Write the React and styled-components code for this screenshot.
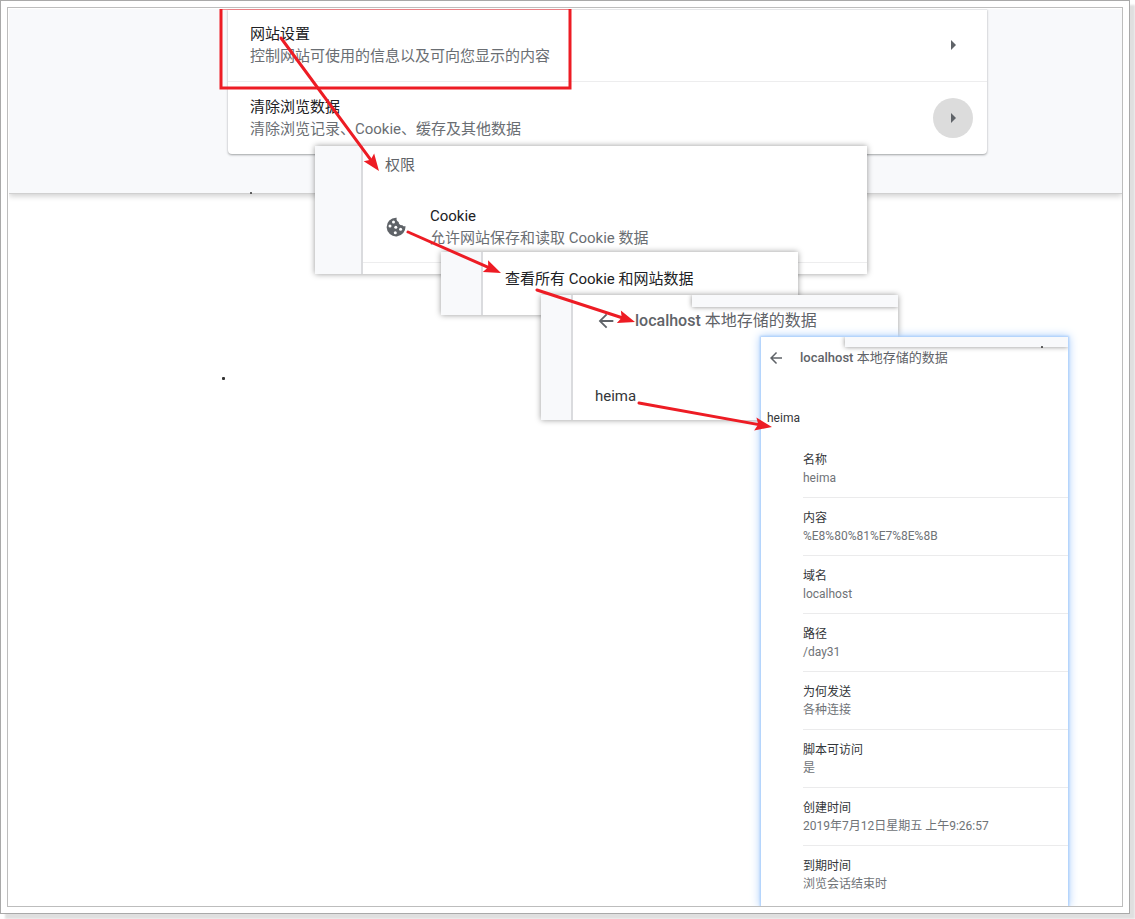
import React from "react";
import styled, { createGlobalStyle } from "styled-components";

const GlobalStyle = createGlobalStyle`
  * { box-sizing: border-box; }
  body {
    margin: 0;
    background: #fff;
    font-family: Roboto, "Noto Sans CJK SC", sans-serif;
    font-size: 15px;
    color: #202124;
  }
  h2, h3, p, dl, dd, dt { margin: 0; font-weight: 400; }
`;

const Page = styled.main`
  display: flex;
  min-height: 100vh;
  padding: 0 5px 5px 0;
`;

const Frame = styled.div`
  display: flex;
  flex: 1;
  padding: 6px;
  border: 1px solid #a9a9a9;
  background: #fff;
  box-shadow: 5px 5px 2px #dfdfdf;
`;

const Mat = styled.div`
  display: flex;
  flex: 1;
  padding: 1px 0 0 1px;
  border: 1px solid #bdbdbd;
`;

const Canvas = styled.div`
  position: relative;
  flex: 1;
  overflow: hidden;
`;

const Backdrop = styled.section`
  height: 185px;
  padding-left: 219px;
  background: #f8f9fb;
  border-bottom: 1px solid #d0d0d0;
  box-shadow: 0 2px 6px rgba(0, 0, 0, 0.2);
`;

const Card = styled.div`
  max-width: 759px;
  border-radius: 0 0 4px 4px;
  background: #fff;
  box-shadow: inset 0 1px #e6e7e9, 0 1px 2px rgba(60, 64, 67, 0.35),
    0 1px 3px rgba(60, 64, 67, 0.15);
`;

const CardRow = styled.div`
  display: flex;
  align-items: center;
  justify-content: space-between;
  box-sizing: content-box;
  height: 72px;
  padding: 0 14px 0 22px;

  & + & { border-top: 1px solid #ededee; }
`;

const Primary = styled.h3`
  font-size: 15px;
  line-height: 22px;
  color: #202124;
  white-space: nowrap;
`;

const Secondary = styled.p`
  font-size: 15px;
  line-height: 22px;
  color: #6a6e73;
  white-space: nowrap;
`;

const RoundButton = styled.button`
  display: grid;
  place-items: center;
  width: 40px;
  height: 40px;
  padding: 0;
  border: 0;
  border-radius: 50%;
  background: ${(p) => (p.$active ? "#dcdcdc" : "transparent")};
  color: #5f6368;
`;

const BackButton = styled.button`
  display: grid;
  place-items: center;
  flex: none;
  width: ${(p) => p.$size}px;
  height: ${(p) => p.$size}px;
  padding: 0;
  border: 0;
  background: none;
  color: #5f6368;
`;

const Window = styled.section`
  position: absolute;
  left: ${(p) => p.$x}px;
  top: ${(p) => p.$y}px;
  width: ${(p) => p.$w}px;
  height: ${(p) => p.$h}px;
  display: flex;
  background: #fff;
  box-shadow: 0 0 6px rgba(0, 0, 0, 0.4);
`;

const Gutter = styled.div`
  flex: none;
  width: ${(p) => p.$w}px;
  background: #f8f9fb;
  border-right: 2px solid #dadbde;
`;

const WindowBody = styled.div`
  flex: 1;
  min-width: 0;
  padding: ${(p) => p.$pad};
`;

const Permission = styled.div`
  display: flex;
  align-items: center;
  gap: 24px;
  height: 72px;
  margin-top: 15px;
  padding-left: 23px;
  border-bottom: 1px solid #ededee;
`;

const GroupTitle = styled.h2`
  padding-left: 22px;
  font-size: 15px;
  line-height: 22px;
  color: #5f6368;
`;

const TitleBar = styled.header`
  display: flex;
  align-items: center;
  gap: ${(p) => p.$gap}px;
`;

const Title = styled.h2`
  font-size: ${(p) => p.$size}px;
  line-height: 22px;
  color: #5f6368;
  white-space: nowrap;

  b { font-weight: 500; }
`;

const Item = styled.h3`
  margin-top: ${(p) => p.$top}px;
  font-size: ${(p) => p.$size}px;
  line-height: 22px;
  color: #333639;
`;

const Strip = styled.div`
  position: absolute;
  top: 0;
  right: 0;
  width: ${(p) => p.$w}px;
  height: ${(p) => p.$h}px;
  background: #f8f9fb;
  box-shadow: 0 0 5px rgba(0, 0, 0, 0.45);
  clip-path: inset(0 0 -8px -8px);
`;

const DetailWindow = styled.section`
  position: absolute;
  left: 752px;
  top: 328px;
  bottom: 0;
  width: 307px;
  padding: 10px 0 0 6px;
  background: #fff;
  box-shadow: 0 0 2px 1px #a9cdfb, 0 0 9px 1px #a9cdfb;
`;

const Details = styled.dl`
  margin: 11px 0 0 36px;
`;

const Detail = styled.div`
  padding: 11px 0 10px;
  font-size: 12px;
  line-height: 18px;
  border-bottom: 1px solid #ebebec;

  &:last-child { border-bottom: 0; }
  dt { color: #333639; }
  dd { color: #6f7377; }
`;

const Dot = styled.span`
  position: absolute;
  left: ${(p) => p.$x}px;
  top: ${(p) => p.$y}px;
  width: ${(p) => p.$size}px;
  height: ${(p) => p.$size}px;
  border-radius: 1px;
  background: #333;
`;

const Annotations = styled.svg`
  position: absolute;
  left: 0;
  top: 0;
  width: 100%;
  height: 100%;
  pointer-events: none;
`;

const details = [
  ["名称", "heima"],
  ["内容", "%E8%80%81%E7%8E%8B"],
  ["域名", "localhost"],
  ["路径", "/day31"],
  ["为何发送", "各种连接"],
  ["脚本可访问", "是"],
  ["创建时间", "2019年7月12日星期五 上午9:26:57"],
  ["到期时间", "浏览会话结束时"],
];

const arrows = [
  [272, 29, 370, 162],
  [399, 223, 492, 264],
  [528, 281, 626, 313],
  [630, 394, 763, 418],
];

const Caret = () => (
  <svg width="6" height="10" viewBox="0 0 6 10" aria-hidden="true">
    <path d="M1 0 L6 5 L1 10z" fill="currentColor" />
  </svg>
);

const BackIcon = ({ size }) => (
  <svg width={size} height={size} viewBox="0 0 24 24" aria-hidden="true">
    <path d="M20 11H7.83l5.59-5.59L12 4l-8 8 8 8 1.41-1.41L7.83 13H20v-2z" fill="currentColor" />
  </svg>
);

const CookieIcon = () => (
  <svg width="20" height="20" viewBox="0 0 20 20" aria-hidden="true">
    <path
      d="M10 .7a9.4 9.4 0 1 0 9.4 8.4c-1.2.5-2.6.1-3.2-1-2 .3-3.6-1-3.5-3C11 4.500 10 2.600 10.800.8z"
      fill="#5f6368"
    />
    <g fill="#fff">
      <circle cx="7.500" cy="5" r="1.500" />
      <circle cx="4" cy="9" r="1.500" />
      <circle cx="9.800" cy="10.300" r="1.500" />
      <circle cx="14.600" cy="12.300" r="1.500" />
      <circle cx="9.300" cy="15.800" r="1.500" />
    </g>
  </svg>
);

function Arrow({ points: [x1, y1, x2, y2] }) {
  const length = Math.hypot(x2 - x1, y2 - y1);
  const angle = (Math.atan2(y2 - y1, x2 - x1) * 180) / Math.PI;
  return (
    <g transform={`translate(${x1} ${y1}) rotate(${angle})`}>
      <path d={`M0 0H${length - 12}`} stroke="#ed1c24" strokeWidth="3" strokeLinecap="round" />
      <path
        d={`M${length} 0L${length - 17} -6.500L${length - 14} 0L${length - 17} 6.500z`}
        fill="#ed1c24"
      />
    </g>
  );
}

export default function App() {
  return (
    <>
      <GlobalStyle />
      <Page>
        <Frame>
          <Mat>
            <Canvas>
              <Backdrop>
                <Card>
                  <CardRow>
                    <div>
                      <Primary>网站设置</Primary>
                      <Secondary>控制网站可使用的信息以及可向您显示的内容</Secondary>
                    </div>
                    <RoundButton aria-label="网站设置"><Caret /></RoundButton>
                  </CardRow>
                  <CardRow>
                    <div>
                      <Primary>清除浏览数据</Primary>
                      <Secondary>清除浏览记录、Cookie、缓存及其他数据</Secondary>
                    </div>
                    <RoundButton $active aria-label="清除浏览数据"><Caret /></RoundButton>
                  </CardRow>
                </Card>
              </Backdrop>

              <Dot $x={241} $y={183} $size={2} />
              <Dot $x={213} $y={368} $size={3} />

              <Window $x={306} $y={137} $w={552} $h={128}>
                <Gutter $w={48} />
                <WindowBody $pad="8px 0 0">
                  <GroupTitle>权限</GroupTitle>
                  <Permission>
                    <CookieIcon />
                    <div>
                      <Primary>Cookie</Primary>
                      <Secondary>允许网站保存和读取 Cookie 数据</Secondary>
                    </div>
                  </Permission>
                </WindowBody>
              </Window>

              <Window $x={432} $y={243} $w={357} $h={63}>
                <Gutter $w={42} />
                <WindowBody $pad="16px 0 0 22px">
                  <Primary>查看所有 Cookie 和网站数据</Primary>
                </WindowBody>
              </Window>

              <Window $x={532} $y={286} $w={357} $h={125}>
                <Gutter $w={32} />
                <WindowBody $pad="15px 0 0 22px">
                  <TitleBar $gap={18}>
                    <BackButton $size={22} aria-label="返回"><BackIcon size={22} /></BackButton>
                    <Title $size={16}><b>localhost</b> 本地存储的数据</Title>
                  </TitleBar>
                  <Item $top={53} $size={15}>heima</Item>
                </WindowBody>
                <Strip $w={206} $h={12} />
              </Window>

              <DetailWindow>
                <TitleBar $gap={15}>
                  <BackButton $size={18} aria-label="返回"><BackIcon size={18} /></BackButton>
                  <Title $size={13}><b>localhost</b> 本地存储的数据</Title>
                </TitleBar>
                <Item $top={38} $size={12}>heima</Item>
                <Details>
                  {details.map(([name, value]) => (
                    <Detail key={name}>
                      <dt>{name}</dt>
                      <dd>{value}</dd>
                    </Detail>
                  ))}
                </Details>
                <Strip $w={223} $h={10} />
                <Dot $x={280} $y={9} $size={2} />
              </DetailWindow>

              <Annotations aria-hidden="true">
                <rect x="212" y="-1" width="349" height="80" fill="none" stroke="#ed1c24" strokeWidth="3" />
                {arrows.map((points) => (
                  <Arrow key={points.join()} points={points} />
                ))}
              </Annotations>
            </Canvas>
          </Mat>
        </Frame>
      </Page>
    </>
  );
}
